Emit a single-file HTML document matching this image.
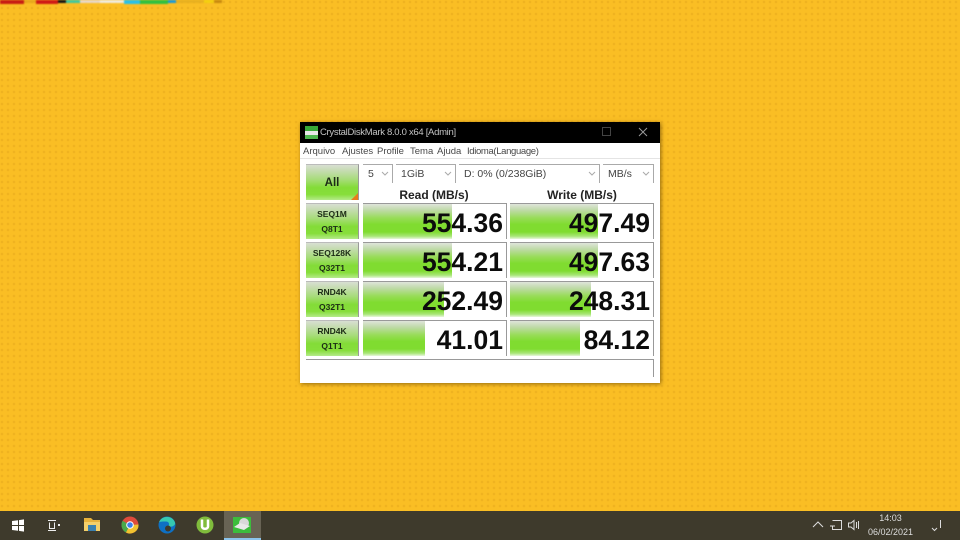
<!DOCTYPE html>
<html><head><meta charset="utf-8">
<style>
html,body{margin:0;padding:0;width:960px;height:540px;overflow:hidden;font-family:"Liberation Sans",sans-serif}
#bg{position:absolute;left:0;top:0;width:960px;height:540px;background-color:#fabe24;background-image:radial-gradient(circle at 2px 2px,rgba(205,140,20,.24) 0,rgba(205,140,20,.24) 1px,transparent 1.6px);background-size:6px 6px}
.a{position:absolute}
#win{left:300px;top:122px;width:360px;height:261px;background:#fff;box-shadow:1px 1px 4px rgba(90,60,0,.65)}
#title{left:0;top:0;width:360px;height:21px;background:#000;color:#c4c4c4;font-size:9.5px;line-height:21px;letter-spacing:-.3px}
.menu{top:23px;font-size:9.5px;color:#484848;line-height:13px;white-space:nowrap}
.btn{background:linear-gradient(#d8dfd2 0,#c8dcb6 14%,#a6dc78 42%,#84dc38 64%,#86de3a 84%,#b4ea8a 100%);border-right:1px solid #999;border-top:1px solid #bbb;box-sizing:border-box;text-align:center;font-weight:bold;color:#1c2b16}
.t{font-size:8.5px;line-height:15px;padding-top:3px}
.box{border-top:1px solid #999;border-right:1px solid #999;box-sizing:border-box;background:#fff}
.bar{left:0;top:0;height:100%;background:linear-gradient(#dfe4da 0,#bedaa6 18%,#98dc58 40%,#80dc30 58%,#80dc30 80%,#a8e678 92%,#e8f6dc 100%)}
.v{right:3px;top:4.500px;font-size:26.5px;line-height:28px;font-weight:bold;color:#0c0c0c}
.dd{top:42px;height:19px;border-top:1px solid #aaa;border-right:1px solid #aaa;box-sizing:border-box;font-size:10.5px;line-height:18px;color:#444;padding-left:5px;white-space:nowrap}
.dd svg{position:absolute;right:3px;top:6px}
.h{top:67px;font-size:12px;font-weight:bold;color:#222;line-height:13px;text-align:center}
#tb{left:0;top:511px;width:960px;height:29px;background:#3e3a2c}
</style></head><body>
<div id="bg"></div>
<svg class="a" style="left:0;top:0;filter:blur(.7px)" width="240" height="6">
<rect x="0" y="0" width="24" height="4" fill="#c71c14"/><rect x="24" y="0" width="12" height="3" fill="#e8a81c"/><rect x="36" y="0" width="22" height="4" fill="#d01a16"/><rect x="58" y="0" width="8" height="3" fill="#151515"/><rect x="66" y="0" width="14" height="3" fill="#40c8a0"/><rect x="80" y="0" width="20" height="3" fill="#e8d8c8"/><rect x="100" y="0" width="24" height="3" fill="#f0ece0"/><rect x="124" y="0" width="16" height="4" fill="#28c0e8"/><rect x="140" y="0" width="28" height="4" fill="#30c040"/><rect x="168" y="0" width="8" height="3" fill="#1a9ad8"/><rect x="176" y="0" width="28" height="3" fill="#e8b020"/><rect x="204" y="0" width="10" height="3" fill="#f4d010"/><rect x="214" y="0" width="8" height="3" fill="#c88a10"/>
</svg>

<div id="win" class="a">
 <div id="title" class="a">
  <svg class="a" style="left:5px;top:4px" width="14" height="14"><rect x="0" y="0" width="13" height="5" fill="#38a838"/><rect x="0" y="5" width="13" height="4" fill="#e8e8e8"/><rect x="0" y="9" width="13" height="4" fill="#50b850"/></svg>
  <span class="a" style="left:20px;top:0;white-space:nowrap">CrystalDiskMark 8.0.0 x64 [Admin]</span>
  <svg class="a" style="left:302px;top:5px" width="10" height="10"><rect x=".5" y=".5" width="8" height="8" fill="none" stroke="#444"/></svg>
  <svg class="a" style="left:338px;top:5px" width="10" height="10"><path d="M1 1L9 9M9 1L1 9" stroke="#999" fill="none"/></svg>
 </div>
 <span class="a menu" style="left:3px">Arquivo</span>
 <span class="a menu" style="left:42px">Ajustes</span>
 <span class="a menu" style="left:77px">Profile</span>
 <span class="a menu" style="left:110px">Tema</span>
 <span class="a menu" style="left:137px">Ajuda</span>
 <span class="a menu" style="left:167px;letter-spacing:-.35px">Idioma(Language)</span>
 <div class="a" style="left:0;top:36px;width:360px;height:1px;background:#e4e4e4"></div>

 <div class="a btn" style="left:6px;top:42px;width:53px;height:36px;font-size:11.5px;line-height:36px">All<svg class="a" style="right:0;bottom:0" width="7" height="7"><path d="M7 0V7H0Z" fill="#e87c1c"/></svg></div>
 <div class="a dd" style="left:63px;width:30px">5<svg width="8" height="6"><path d="M1 1L4 4L7 1" stroke="#aaa" fill="none"/></svg></div>
 <div class="a dd" style="left:96px;width:60px">1GiB<svg width="8" height="6"><path d="M1 1L4 4L7 1" stroke="#aaa" fill="none"/></svg></div>
 <div class="a dd" style="left:159px;width:141px">D: 0% (0/238GiB)<svg width="8" height="6"><path d="M1 1L4 4L7 1" stroke="#aaa" fill="none"/></svg></div>
 <div class="a dd" style="left:303px;width:51px">MB/s<svg width="8" height="6"><path d="M1 1L4 4L7 1" stroke="#aaa" fill="none"/></svg></div>
 <div class="a h" style="left:62px;width:144px;top:67px">Read (MB/s)</div>
 <div class="a h" style="left:210px;width:144px;top:67px">Write (MB/s)</div>

 <div class="a btn t" style="left:6px;top:81px;width:53px;height:36px">SEQ1M<br>Q8T1</div>
 <div class="a box" style="left:63px;top:81px;width:144px;height:36px"><div class="a bar" style="width:89px"></div><div class="a v">554.36</div></div>
 <div class="a box" style="left:210px;top:81px;width:144px;height:36px"><div class="a bar" style="width:88px"></div><div class="a v">497.49</div></div>

 <div class="a btn t" style="left:6px;top:120px;width:53px;height:36px">SEQ128K<br>Q32T1</div>
 <div class="a box" style="left:63px;top:120px;width:144px;height:36px"><div class="a bar" style="width:89px"></div><div class="a v">554.21</div></div>
 <div class="a box" style="left:210px;top:120px;width:144px;height:36px"><div class="a bar" style="width:88px"></div><div class="a v">497.63</div></div>

 <div class="a btn t" style="left:6px;top:159px;width:53px;height:36px">RND4K<br>Q32T1</div>
 <div class="a box" style="left:63px;top:159px;width:144px;height:36px"><div class="a bar" style="width:81px"></div><div class="a v">252.49</div></div>
 <div class="a box" style="left:210px;top:159px;width:144px;height:36px"><div class="a bar" style="width:81px"></div><div class="a v">248.31</div></div>

 <div class="a btn t" style="left:6px;top:198px;width:53px;height:36px">RND4K<br>Q1T1</div>
 <div class="a box" style="left:63px;top:198px;width:144px;height:36px"><div class="a bar" style="width:62px"></div><div class="a v">41.01</div></div>
 <div class="a box" style="left:210px;top:198px;width:144px;height:36px"><div class="a bar" style="width:70px"></div><div class="a v">84.12</div></div>

 <div class="a box" style="left:6px;top:237px;width:348px;height:18px"></div>
</div>

<div id="tb" class="a">
 <svg class="a" style="left:0;top:0" width="270" height="29">
  <path d="M12 10L18 9.200V14H12ZM19 9.100L24 8.400V14H19ZM12 15H18V19.800L12 19ZM19 15H24V20.600L19 19.900Z" fill="#fff"/>
  <path d="M48 9.500H56M48 19.500H56M49.500 11.500V17.500H54.500V11.500" stroke="#eee" fill="none"/><rect x="58" y="13" width="2" height="2" fill="#eee"/>
  <path d="M84 7H91L93 9H100V20H84Z" fill="#e8b23c"/><rect x="84" y="11" width="16" height="9" fill="#f4cf6a"/><rect x="88" y="14" width="8" height="6" fill="#3a80b0"/>
  <circle cx="130" cy="14" r="8.500" fill="#dd4b3c"/><path d="M130 14L122.600 9.800A8.500 8.500 0 0 0 126 21.500Z" fill="#4aa84a"/><path d="M130 14L126 21.500A8.500 8.500 0 0 0 138.500 13.500Z" fill="#f2c230"/><circle cx="130" cy="14" r="3.800" fill="#fff"/><circle cx="130" cy="14" r="2.800" fill="#3f80e8"/>
  <circle cx="167" cy="14" r="8.500" fill="#0e70c4"/><path d="M159 11.500C161 4.500 172 3.500 175 11.500C175.800 14.500 172 16.500 168 15.500C170 13.500 169 10.500 166 10.500C163 10.500 160 10.500 159 11.500Z" fill="#36c8b0"/><circle cx="168" cy="17.500" r="3" fill="#3e3a2c"/>
  <circle cx="205" cy="14" r="8.500" fill="#80bc3c"/><path d="M202 8.500V15.500C202 18.500 208 18.500 208 15.500V8.500" stroke="#fff" stroke-width="2.500" fill="none"/>
  <rect x="224" y="0" width="37" height="29" fill="#686354"/><rect x="224" y="27" width="37" height="2" fill="#8cc4ec"/>
  <rect x="233" y="6" width="18" height="16" fill="#3cbc3c"/><ellipse cx="244" cy="12" rx="5" ry="5" fill="#d8d8d8"/><path d="M234 16L244 19L250 15L240 12Z" fill="#e8e8e8"/>
 </svg>
 <svg class="a" style="left:810px;top:0" width="60" height="29">
  <path d="M3 16L8 11L13 16" stroke="#ddd" fill="none"/>
  <path d="M22.500 9.500H31.500V18.500H22.500V15M20 15H25" stroke="#ddd" fill="none"/>
  <path d="M38.500 12H41L44 9.500V18.500L41 16H38.500ZM46.500 11V17M48.500 10V18" stroke="#ddd" fill="none"/>
 </svg>
 <div class="a" style="left:860px;top:0;width:61px;text-align:center;color:#ddd;font-size:9px;line-height:14px">14:03<br>06/02/2021</div>
 <svg class="a" style="left:930px;top:0" width="14" height="29">
  <path d="M2 17L4.500 19.500L7 17" stroke="#ddd" fill="none"/><path d="M10.500 9V17" stroke="#ddd" fill="none"/>
 </svg>
</div>
</body></html>
